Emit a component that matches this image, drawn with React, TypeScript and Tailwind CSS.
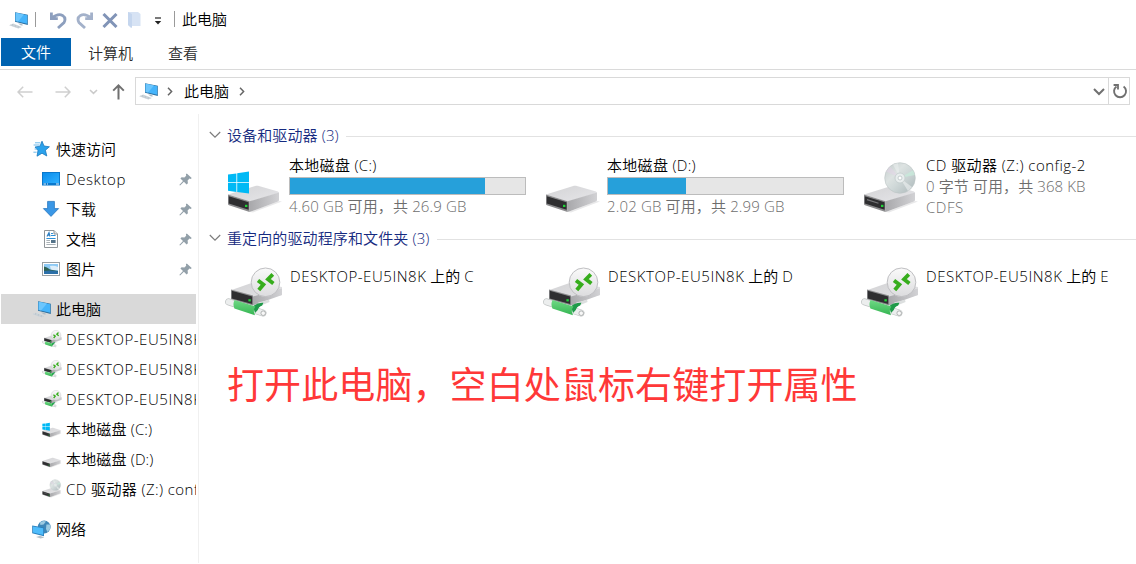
import type { ReactNode } from "react";

const PcIcon = ({ className = "" }: { className?: string }) => (
  <svg width="20" height="18" viewBox="0 0 20 18" className={`shrink-0 ${className}`}>
    <path d="M6 1.2 18.8 3.8V14L6 10.8Z" fill="#2b6f9f" />
    <path d="M6.6 1.8 18.2 4.2V12.8L6.6 10Z" fill="#45b4fb" />
    <path d="M6.6 1.8 15 3.6 9 10.5 6.6 10Z" fill="#6cc6fd" />
    <path d="M0 14.2 4.2 12.6 13 16 9.2 17.6Z" fill="#d3dade" />
    <path d="M1.6 14 10.4 17M3 13.3 11.6 16.4" stroke="#a9b6bf" strokeWidth=".6" strokeDasharray="1 .6" />
    <path d="M9 12.6 12 14.6 14.4 14.2 12 12.4Z" fill="#aebbc4" />
  </svg>
);

const Defs = () => (
  <svg width="0" height="0" className="absolute">
    <defs>
      <linearGradient id="top" x1="0" x2="1" y1="0" y2="1">
        <stop offset="0" stopColor="#d3d3d5" />
        <stop offset="1" stopColor="#e6e6e9" />
      </linearGradient>
      <linearGradient id="side" x1="0" x2="1">
        <stop offset="0" stopColor="#a8a8ab" />
        <stop offset="1" stopColor="#d2d2d5" />
      </linearGradient>
      <linearGradient id="disc" x1="0" x2="1" y1="0" y2="1">
        <stop offset="0" stopColor="#c3cbcb" />
        <stop offset=".35" stopColor="#dde3e2" />
        <stop offset=".55" stopColor="#cfd8d8" />
        <stop offset="1" stopColor="#aab6b8" />
      </linearGradient>
      <linearGradient id="ball" x1="0" x2="0" y1="0" y2="1">
        <stop offset="0" stopColor="#fafafa" />
        <stop offset="1" stopColor="#dcdcde" />
      </linearGradient>
      <linearGradient id="pipe" x1="0" x2="0" y1="0" y2="1">
        <stop offset="0" stopColor="#6fd985" />
        <stop offset="1" stopColor="#35b552" />
      </linearGradient>
      <linearGradient id="blue" x1="0" x2="1" y1="0" y2="1">
        <stop offset="0" stopColor="#0a8dec" />
        <stop offset="1" stopColor="#2fb0ff" />
      </linearGradient>
    </defs>
  </svg>
);

const DriveBody = ({ slot = false }: { slot?: boolean }) => (
  <g>
    <path d="M23 43 52 32 55 32.5 26 43.5Z" fill="#e9e9ea" />
    <path d="M1 25.6 29 16.8Q30 16.5 31 16.8L51 22.6 52 24 23 32.5Z" fill="url(#top)" />
    <path d="M22.5 32.3 52 23.6V31Q52 32 51 32.4L24 42.6 22.5 43Z" fill="url(#side)" />
    <path d="M1 25.6 22.5 32.3V43L2 36.2Q1 36 1 35Z" fill="#8b8b8d" />
    <path d="M1.8 27.2 21.6 33.2V40.8L1.8 34.4Z" fill="#2e2e30" />
    {slot && <path d="M4 30.6 15.5 34.2" stroke="#77777a" strokeWidth="1.2" />}
    <rect x="18" y="35.8" width="2.4" height="2.2" fill="#1fd437" />
  </g>
);

const WinLogo = () => (
  <path d="M1 3 9.4 1.8V10.6H1ZM10.2 1.7 22 0V10.6H10.2ZM1 11.5H9.4V20.3L1 19.1ZM10.2 11.5H22V22L10.2 20.4Z" fill="#00b9f5" />
);

const Disc = () => (
  <g>
    <circle cx="37" cy="9" r="15.3" fill="url(#disc)" stroke="#bcc4c5" strokeWidth=".6" />
    <path d="M37 9 23 2.6 27-2.6Z" fill="#e3d3e8" opacity=".5" />
    <path d="M37 9 50 1.2 51.8 6Z" fill="#c8ecdb" opacity=".7" />
    <path d="M37 9 45 22 49 18Z" fill="#eef2f2" opacity=".6" />
    <path d="M37 9 30-4.5 35-6Z" fill="#eef1f1" opacity=".5" />
    <circle cx="37" cy="9" r="5" fill="#e9eeee" stroke="#c1cbcc" strokeWidth=".8" />
    <circle cx="37" cy="9" r="2" fill="#fff" stroke="#b9c3c4" strokeWidth=".8" />
  </g>
);

const DriveIcon = ({ kind, small = false }: { kind: "c" | "d" | "z"; small?: boolean }) => (
  <svg
    width={small ? 20 : 56}
    height={small ? 20 : 52}
    viewBox={small ? "0 -8 56 56" : "0 -8 56 52"}
    className="shrink-0 overflow-visible"
  >
    {kind === "z" && <g><DriveBody slot /><Disc /></g>}
    {kind !== "z" && <DriveBody />}
    {kind === "c" && <g transform="translate(0 2.6)"><WinLogo /></g>}
  </svg>
);

const RemoteIcon = ({ small = false }: { small?: boolean }) => (
  <svg width={small ? 20 : 58} height={small ? 18 : 52} viewBox="0 0 58 52" className="shrink-0">
    <path d="M6.5 23 28 15.5 57 20V28L28 36Z" fill="url(#top)" />
    <path d="M28 29.4 57 21.6V28L28 38.4Z" fill="url(#side)" />
    <path d="M6 22.4 28 28.6V38.6L6 32.6Z" fill="#8b8b8d" />
    <path d="M6.8 23.8 27.2 29.6V37L6.8 31.4Z" fill="#2e2e30" />
    <rect x="23.4" y="32.2" width="2.4" height="2.2" fill="#1fd437" />
    <path d="M33 35.4 44 32.8 44.6 35 36 38.4Z" fill="#dcdfdf" />
    <path d="M3.6 34.8 38 46" stroke="#c0c4c4" strokeWidth="7" strokeLinecap="round" />
    <path d="M3.6 34.8 38 46" stroke="#eceeee" strokeWidth="5.6" strokeLinecap="round" />
    <path d="M28 39.4Q32 35.4 38.4 35.8L37.2 38.4Q33.6 39.6 32.8 43L30 46Z" fill="#1f9a49" />
    <path d="M9.6 33 30.4 39.4Q27.6 43 30 48.2L9.4 41.6Q7.4 37 9.6 33Z" fill="url(#pipe)" />
    <circle cx="38.2" cy="46.2" r="2.3" fill="#f8f8f8" stroke="#a9adad" strokeWidth=".9" />
    <circle cx="40.5" cy="15.3" r="14.3" fill="url(#ball)" stroke="#bfbfc2" strokeWidth="1" />
    <path d="M33 13.4 38.4 17.6 33.8 23M47.8 7.4 43 12.2 48.4 16.4" fill="none" stroke="#36ad1c" strokeWidth="3.8" />
  </svg>
);

const StarIcon = () => (
  <svg width="18" height="18" viewBox="0 0 18 18" className="shrink-0">
    <path d="M10 1.2 12 6 17.4 6.8 13.4 10.2 14.8 16 10 13.2 5 16.2 6 10.6 3 7 8 6.2Z" fill="#2ba2ec" stroke="#1c78bd" strokeWidth=".8" />
    <path d="M3 2.8H8.4M1.6 5H7.6M2.6 9H4.8M1.4 12.2H4.6" stroke="#6db9ea" strokeWidth="1" />
  </svg>
);

const DesktopIcon = () => (
  <svg width="18" height="14" viewBox="0 0 18 14" className="shrink-0">
    <rect width="18" height="13.5" fill="#0a78cc" />
    <rect x="1" y="1" width="16" height="10" fill="url(#blue)" />
    <path d="M1.5 12H4M5 12H6M14 12H17" stroke="#fff" strokeWidth=".9" />
  </svg>
);

const DownIcon = () => (
  <svg width="18" height="18" viewBox="0 0 18 18" className="shrink-0">
    <path d="M5.6 1.4H12.4V8.6H16.6L9 16.4 1.4 8.6H5.6Z" fill="#3a97e6" stroke="#2776bf" strokeWidth=".8" />
  </svg>
);

const DocIcon = () => (
  <svg width="18" height="18" viewBox="0 0 18 18" className="shrink-0">
    <path d="M2.5.5H12L15.5 4V17.5H2.5Z" fill="#fff" stroke="#8f9498" />
    <path d="M12 .5V4H15.5" fill="#e5e5e5" stroke="#8f9498" />
    <path d="M5 6.5 7 2.6 8 6.5M5.6 5.2H7.8" stroke="#2d7fc4" fill="none" strokeWidth="1.2" />
    <path d="M9 3.5H11M9 5.5H13.6M4.4 8.5H13.6" stroke="#2d8fd6" strokeWidth="1" />
    <path d="M4.4 10.5H8M4.4 12.5H8M4.4 14.5H13.6" stroke="#a9b1b6" strokeWidth="1" />
    <rect x="9" y="10" width="4.6" height="3" fill="#54738a" />
  </svg>
);

const PicIcon = () => (
  <svg width="18" height="14" viewBox="0 0 18 14" className="shrink-0">
    <rect x=".5" y=".5" width="17" height="13" fill="#fff" stroke="#9aa0a4" />
    <rect x="2" y="2" width="14" height="10" fill="#8ecaf5" />
    <path d="M8 4Q12 3 16 5V8H9Z" fill="#ddeefa" />
    <path d="M2 4.6Q5 5 8 7.4L16 9V10H2Z" fill="#2f6253" />
    <path d="M2 9Q9 8 16 9.4V12H2Z" fill="#2b6fa8" />
  </svg>
);

const NetIcon = () => (
  <svg width="19" height="19" viewBox="0 0 19 19" className="shrink-0">
    <circle cx="12.2" cy="7" r="6.4" fill="#3f87b8" />
    <path d="M8 2.4Q11 0 14 1.4L11.6 4.6 8.4 5ZM14.4 4.4 18 4.6 18.2 9 15.4 12 14 9Z" fill="#9ccbe2" />
    <path d="M.2 5.4 12 7.6V16.2L.2 13.2Z" fill="#2980bd" />
    <path d="M1 6.4 11.2 8.2V15L1 12.5Z" fill="#4fbcfb" />
    <path d="M4 17 8 15.8 12.4 17.4 8.6 18.6Z" fill="#b7c3ca" />
  </svg>
);

const Pin = () => (
  <svg width="13" height="13" viewBox="0 0 13 13" className="mr-1 shrink-0">
    <path d="M7.8.4 12.7 5 11.8 5.9 10.5 5.6 8.6 7.6 8.9 10.2 7.6 11.4 4.9 8.8 1.1 12.5.3 11.9 4 8 1.4 5.6 2.6 4.2 5.4 4.5 7.2 2.7 6.9 1.3Z" fill="#93a0a9" />
  </svg>
);

const Chevron = ({ className }: { className: string }) => (
  <svg width="12" height="8" viewBox="0 0 12 8" className={className}>
    <path d="M.8 1 6 6.2 11.2 1" fill="none" stroke="currentColor" strokeWidth="1.2" />
  </svg>
);

const Crumb = () => (
  <svg width="6" height="9" viewBox="0 0 6 9" className="shrink-0">
    <path d="M1 .8 4.6 4.5 1 8.2" fill="none" stroke="#666" strokeWidth="1.5" />
  </svg>
);

const Row = ({ icon, children, pad, pin = false, active = false }: {
  icon: ReactNode; children: ReactNode; pad: string; pin?: boolean; active?: boolean;
}) => (
  <div className={`flex h-[30px] w-[195px] items-center overflow-hidden ${pad} ${active ? "bg-[#d9d9d9]" : ""}`}>
    <span className="flex w-6 shrink-0 items-center">{icon}</span>
    <span className="min-w-0 flex-1 overflow-hidden">{children}</span>
    {pin && <Pin />}
  </div>
);

const Section = ({ title, children, gap }: { title: ReactNode; children: ReactNode; gap: string }) => (
  <section>
    <div className="flex h-[22px] items-center text-[#152a80]">
      <Chevron className="mr-[6px] shrink-0 text-[#7c7c7c]" />
      <span className="tracking-[0.12px]">{title}</span>
      <span className="ml-[7px] h-px flex-1 translate-y-px bg-[#e2e2e2]" />
    </div>
    <div className={`grid grid-cols-[318px_318px_1fr] ${gap}`}>{children}</div>
  </section>
);

const Usage = ({ percent }: { percent: number }) => (
  <div className="mt-[2px] h-[18px] w-[237px] border border-[#bcbcbc] bg-[#e6e6e6]">
    <div className="h-full bg-[#26a0da]" style={{ width: `${percent}%` }} />
  </div>
);

const Host = () => <span className="tracking-[0.55px]">DESKTOP-EU5IN8K</span>;

export default function App() {
  return (
    <div className="flex h-[564px] w-[1136px] flex-col overflow-hidden bg-white font-['Open_Sans','Noto_Sans_CJK_SC',sans-serif] text-[15px] leading-5 font-[350] whitespace-nowrap text-black">
      <Defs />
      <header className="flex h-[38px] shrink-0 items-center pl-[9px]">
        <PcIcon className="mt-px" />
        <span className="ml-[6px] h-[15px] w-px bg-[#9a9a9a]" />
        <svg width="17" height="18" viewBox="0 0 17 18" className="ml-[14px] mt-px">
          <path d="M1.4 1.4V7.6H7.8M2 7Q8 2 12.5 4.4Q16.5 7 14 11.5L8 17" fill="none" stroke="#8d9fbe" strokeWidth="2.8" />
        </svg>
        <svg width="17" height="18" viewBox="0 0 17 18" className="ml-[9px] mt-px">
          <path d="M15.6 1.4V7.6H9.2M15 7Q9 2 4.5 4.4Q.5 7 3 11.5L9 17" fill="none" stroke="#a3b1ca" strokeWidth="2.8" />
        </svg>
        <svg width="16" height="15" viewBox="0 0 16 15" className="ml-[9px] mt-[2px]">
          <path d="M1.5 1 14.5 14M14.5 1 1.5 14" stroke="#8194b7" strokeWidth="3" />
        </svg>
        <svg width="13" height="17" viewBox="0 0 13 17" className="ml-[10px] mt-px">
          <path d="M0 1H10L12.5 3V15H4L3 17 0 14Z" fill="#d7e3f4" />
          <path d="M0 1 4 3V17L0 14Z" fill="#c5d6ee" />
        </svg>
        <svg width="8" height="8" viewBox="0 0 8 8" className="ml-[13px] mt-[3px]">
          <path d="M1 1H7" stroke="#222" strokeWidth="1.2" />
          <path d="M.8 4H7.2L4 7.4Z" fill="#222" />
        </svg>
        <span className="ml-[12px] h-[16px] w-px bg-[#9a9a9a]" />
        <span className="ml-[7px]">此电脑</span>
      </header>
      <nav className="flex h-8 shrink-0 border-b border-[#dadada] pl-px text-[#2c2c2c]">
        <span className="flex h-7 w-[70px] items-center justify-center bg-[#0063b1] text-white">文件</span>
        <span className="ml-[17px] flex h-[29px] items-center">计算机</span>
        <span className="ml-[35px] flex h-[29px] items-center">查看</span>
      </nav>
      <div className="flex h-[42px] shrink-0 items-center pl-[17px]">
        <svg width="16" height="12" viewBox="0 0 16 12" className="mt-px">
          <path d="M6.2.8 1 6 6.2 11.2M1 6H15.5" fill="none" stroke="#cfcfcf" strokeWidth="1.5" />
        </svg>
        <svg width="16" height="12" viewBox="0 0 16 12" className="mt-px ml-[22px]">
          <path d="M9.8.8 15 6 9.8 11.2M15 6H.5" fill="none" stroke="#cfcfcf" strokeWidth="1.5" />
        </svg>
        <svg width="9" height="6" viewBox="0 0 9 6" className="mt-px ml-[18px]">
          <path d="M1 1 4.5 4.4 8 1" fill="none" stroke="#cacaca" strokeWidth="1.5" />
        </svg>
        <svg width="13" height="16" viewBox="0 0 13 16" className="mt-[2px] ml-[14px]">
          <path d="M1.2 6.6 6.5 1.4 11.8 6.6M6.5 1.4V15.4" fill="none" stroke="#707070" strokeWidth="2" />
        </svg>
        <div className="ml-[10px] flex h-7 w-[995px] items-center border border-[#d9d9d9] pl-[3px]">
          <PcIcon />
          <span className="w-[8px]" />
          <Crumb />
          <span className="mr-[10px] ml-[11px]">此电脑</span>
          <Crumb />
          <span className="flex-1" />
          <svg width="12" height="8" viewBox="0 0 12 8" className="mt-[2px] mr-[3px]">
            <path d="M1 1 6 6 11 1" fill="none" stroke="#707070" strokeWidth="2" />
          </svg>
          <span className="flex h-full w-[21px] items-center justify-center border-l border-[#d9d9d9]">
            <svg width="16" height="16" viewBox="0 0 16 16" className="ml-[2px] shrink-0">
              <path d="M11.6 3.4A6 6 0 1 1 4.5 3.4" fill="none" stroke="#707070" strokeWidth="1.9" />
              <path d="M1.6 2H6V6.4" fill="none" stroke="#707070" strokeWidth="1.8" />
            </svg>
          </span>
        </div>
      </div>
      <div className="flex min-h-0 flex-1">
        <aside className="mt-[2px] mb-px flex w-[199px] shrink-0 flex-col border-r border-[#f0f0f0] pt-5 pl-px">
          <Row pad="pl-[31px]" icon={<StarIcon />}>快速访问</Row>
          <Row pad="pl-[41px]" pin icon={<DesktopIcon />}><span className="tracking-[0.6px]">Desktop</span></Row>
          <Row pad="pl-[41px]" pin icon={<DownIcon />}>下载</Row>
          <Row pad="pl-[41px]" pin icon={<DocIcon />}>文档</Row>
          <Row pad="pl-[41px]" pin icon={<PicIcon />}>图片</Row>
          <div className="mt-[10px]">
            <Row pad="pl-[31px]" active icon={<PcIcon />}>此电脑</Row>
          </div>
          <Row pad="pl-[41px]" icon={<RemoteIcon small />}><Host /></Row>
          <Row pad="pl-[41px]" icon={<RemoteIcon small />}><Host /></Row>
          <Row pad="pl-[41px]" icon={<RemoteIcon small />}><Host /></Row>
          <Row pad="pl-[41px]" icon={<DriveIcon kind="c" small />}><span className="tracking-[0.15px]">本地磁盘 (C:)</span></Row>
          <Row pad="pl-[41px]" icon={<DriveIcon kind="d" small />}><span className="tracking-[0.15px]">本地磁盘 (D:)</span></Row>
          <Row pad="pl-[41px]" icon={<DriveIcon kind="z" small />}><span className="tracking-[0.4px]">CD 驱动器 (Z:) config-2</span></Row>
          <div className="mt-[10px]">
            <Row pad="pl-[31px]" icon={<NetIcon />}>网络</Row>
          </div>
        </aside>
        <main className="flex-1 pt-3 pl-[10px]">
          <Section title="设备和驱动器 (3)" gap="h-[81px] pt-[9px] pl-[18px]">
            <div className="flex">
              <span className="mt-[6px] w-[62px]"><DriveIcon kind="c" /></span>
              <div>
                <p className="tracking-[0.3px]">本地磁盘 (C:)</p>
                <Usage percent={83} />
                <p className="mt-px tracking-[0.15px] text-[#6d6d6d]">4.60 GB 可用，共 26.9 GB</p>
              </div>
            </div>
            <div className="flex">
              <span className="mt-[6px] w-[62px]"><DriveIcon kind="d" /></span>
              <div>
                <p className="tracking-[0.3px]">本地磁盘 (D:)</p>
                <Usage percent={33} />
                <p className="mt-px tracking-[0.15px] text-[#6d6d6d]">2.02 GB 可用，共 2.99 GB</p>
              </div>
            </div>
            <div className="flex">
              <span className="mt-[6px] w-[63px]"><DriveIcon kind="z" /></span>
              <div>
                <p className="tracking-[0.45px]">CD 驱动器 (Z:) config-2</p>
                <p className="mt-px tracking-[0.1px] text-[#6d6d6d]">0 字节 可用，共 368 KB</p>
                <p className="mt-px tracking-[0.5px] text-[#6d6d6d]">CDFS</p>
              </div>
            </div>
          </Section>
          <Section title="重定向的驱动程序和文件夹 (3)" gap="h-[111px] pt-[17px] pl-[16px]">
            {["C", "D", "E"].map((letter) => (
              <div key={letter} className="flex">
                <span className="mt-px w-[65px]"><RemoteIcon /></span>
                <p><Host /> 上的 {letter}</p>
              </div>
            ))}
          </Section>
          <p className="pl-[18px] text-[37px] leading-[50px] font-normal tracking-[0.1px] text-[#ff3838]">打开此电脑，空白处鼠标右键打开属性</p>
        </main>
      </div>
    </div>
  );
}
